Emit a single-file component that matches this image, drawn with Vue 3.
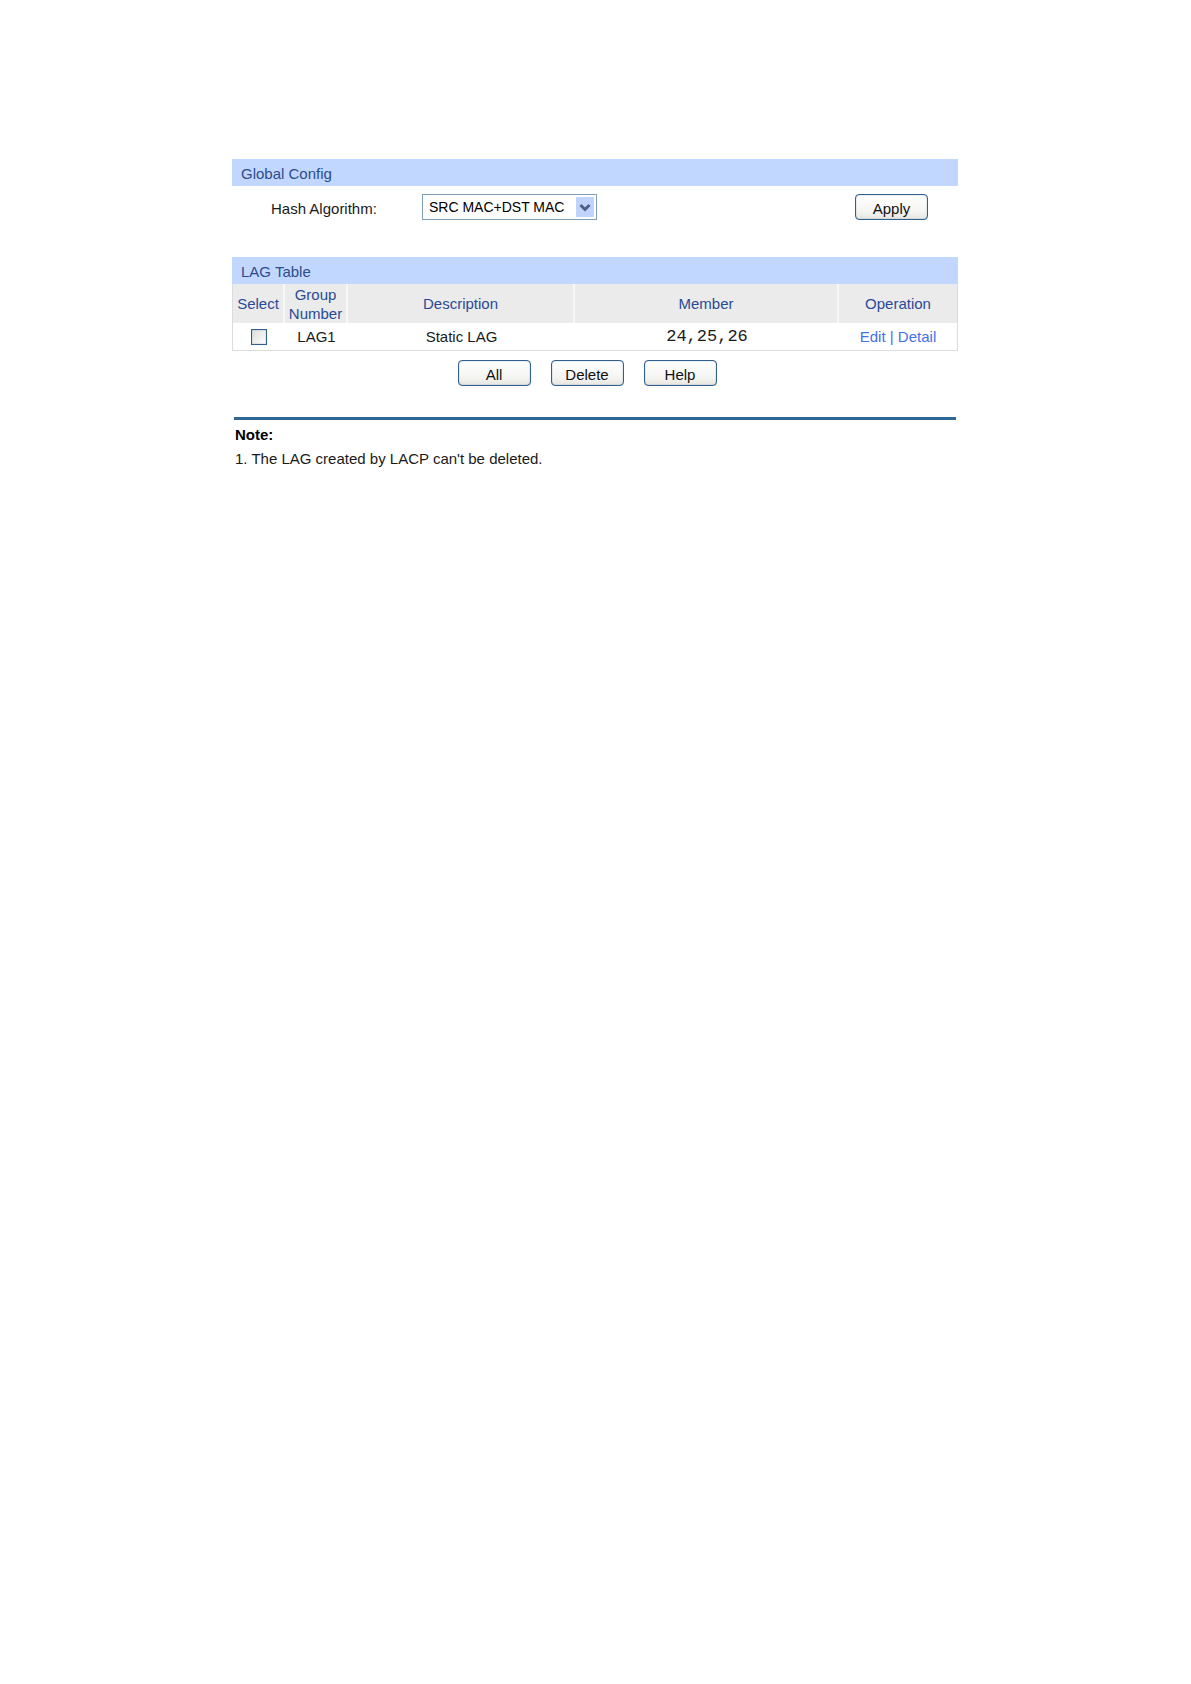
<template>
  <main class="page">
    <section class="config">
      <h2 class="bar">Global Config</h2>
      <form class="config__row" @submit.prevent>
        <label class="config__label" for="hash">Hash Algorithm:</label>
        <div class="dropdown">
          <select id="hash" v-model="hash" class="dropdown__select">
            <option v-for="item in algorithms" :key="item">{{ item }}</option>
          </select>
          <svg class="dropdown__arrow" width="18" height="20" viewBox="0 0 18 20" aria-hidden="true">
            <rect width="18" height="20" rx="1" fill="#c1d3fb" />
            <path d="M4.5 8 L9 12.5 L13.5 8" fill="none" stroke="#4d6185" stroke-width="3" />
          </svg>
        </div>
        <button class="btn config__apply" type="submit">Apply</button>
      </form>
    </section>

    <section>
      <h2 class="bar">LAG Table</h2>
      <table class="lag">
        <thead>
          <tr>
            <th class="lag__select">Select</th>
            <th class="lag__group">Group Number</th>
            <th class="lag__desc">Description</th>
            <th class="lag__member">Member</th>
            <th>Operation</th>
          </tr>
        </thead>
        <tbody>
          <tr v-for="lag in lags" :key="lag.name">
            <td>
              <input v-model="lag.checked" class="lag__check" type="checkbox" :aria-label="lag.name" />
            </td>
            <td>{{ lag.name }}</td>
            <td>{{ lag.description }}</td>
            <td class="lag__ports">{{ lag.members.join(",") }}</td>
            <td class="lag__links"><a href="#">Edit</a> | <a href="#">Detail</a></td>
          </tr>
        </tbody>
      </table>
      <div class="actions">
        <button class="btn" type="button" @click="selectAll">All</button>
        <button class="btn" type="button" @click="removeChecked">Delete</button>
        <button class="btn" type="button">Help</button>
      </div>
    </section>

    <section class="note">
      <h3 class="note__title">Note:</h3>
      <p class="note__text">1. The LAG created by LACP can't be deleted.</p>
    </section>
  </main>
</template>

<script setup>
import { ref } from "vue";

const algorithms = ["SRC MAC+DST MAC", "SRC IP+DST IP"];
const hash = ref(algorithms[0]);

const lags = ref([
  { name: "LAG1", description: "Static LAG", members: [24, 25, 26], checked: false },
]);

const selectAll = () => {
  lags.value.forEach((lag) => (lag.checked = true));
};

const removeChecked = () => {
  lags.value = lags.value.filter((lag) => !lag.checked);
};
</script>

<style>
body {
  background: #fff;
}
</style>

<style scoped>
.page {
  padding: 159px 233px 40px 232px;
  font-family: "Liberation Sans", Arial, sans-serif;
  font-size: 15px;
  line-height: 19px;
  color: #1a1a1a;
}
.bar {
  margin: 0;
  padding: 5px 9px 3px;
  font-size: 15px;
  font-weight: normal;
  color: #2c4c8c;
  background: #c2d7ff;
}
.config {
  margin-bottom: 37px;
}
.config__row {
  display: flex;
  align-items: center;
  padding: 8px 30px 0 39px;
}
.config__label {
  width: 151px;
  padding-top: 2px;
}
.config__apply {
  margin-left: auto;
}
.dropdown {
  position: relative;
  width: 175px;
  height: 26px;
}
.dropdown__select {
  appearance: none;
  width: 100%;
  height: 100%;
  padding: 0 22px 0 6px;
  font: inherit;
  font-size: 14px;
  color: #000;
  background: #fff;
  border: 1px solid #7f9db9;
  border-radius: 0;
}
.dropdown__arrow {
  position: absolute;
  top: 3px;
  right: 3px;
  pointer-events: none;
}
.btn {
  width: 73px;
  height: 26px;
  padding: 2px 0 0;
  font: inherit;
  color: #111;
  background: linear-gradient(#fff, #f4f4f1 70%, #e6e5df);
  border: 1px solid #2f6091;
  border-radius: 4px;
  box-shadow: inset 0 0 1px #2f6091;
}
.lag {
  width: 100%;
  table-layout: fixed;
  border-collapse: separate;
  border-spacing: 0;
  border: 1px solid #dcdcdc;
  border-top: 0;
  text-align: center;
}
.lag th {
  height: 39px;
  padding: 0;
  font-weight: normal;
  line-height: 19px;
  color: #2a4a96;
  background: #ebebeb;
  border-right: 2px solid #f8f8f8;
  box-sizing: border-box;
}
.lag th:last-child {
  border-right: 0;
}
.lag td {
  height: 27px;
  padding: 0;
}
.lag__select {
  width: 52px;
}
.lag__group {
  width: 63px;
}
.lag__desc {
  width: 227px;
}
.lag__member {
  width: 264px;
}
.lag__check {
  appearance: none;
  display: block;
  width: 16px;
  height: 16px;
  margin: 0 auto;
  background: linear-gradient(135deg, #dcdcd7, #fff);
  border: 1px solid #2f6091;
  box-shadow: inset 0 0 1px #2f6091;
}
.lag__check:checked {
  background: #3b6a92;
}
.lag .lag__ports {
  font-family: "Liberation Mono", "Courier New", monospace;
  font-size: 17px;
}
.lag__links,
.lag__links a {
  color: #4470e8;
  text-decoration: none;
}
.actions {
  display: flex;
  justify-content: center;
  gap: 20px;
  padding: 9px 16px 0 0;
}
.note {
  margin: 31px 2px 0;
  border-top: 3px solid #2f6797;
}
.note__title,
.note__text {
  margin: 0;
  padding: 5px 1px 0;
  font-size: 15px;
}
.note__title {
  color: #000;
}
</style>
